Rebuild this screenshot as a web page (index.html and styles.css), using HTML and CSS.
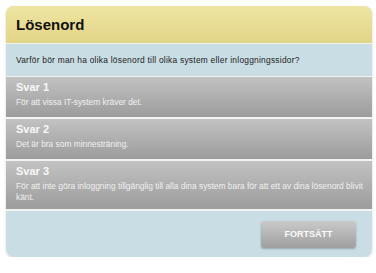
FILE: index.html
```html
<!DOCTYPE html>
<html lang="sv">
<head>
  <meta charset="UTF-8">
  <title>Lösenord</title>
  <link rel="stylesheet" href="styles.css">
</head>
<body>
  <div class="quiz">
    <div class="quiz-header">
      <h1>Lösenord</h1>
    </div>
    <div class="quiz-question">
      <p>Varför bör man ha olika lösenord till olika system eller inloggningssidor?</p>
    </div>
    <div class="answer">
      <h2>Svar 1</h2>
      <p>För att vissa IT-system kräver det.</p>
    </div>
    <div class="answer">
      <h2>Svar 2</h2>
      <p>Det är bra som minnesträning.</p>
    </div>
    <div class="answer">
      <h2>Svar 3</h2>
      <p>För att inte göra inloggning tillgänglig till alla dina system bara för att ett av dina lösenord blivit känt.</p>
    </div>
    <div class="quiz-footer">
      <button class="next-btn">FORTSÄTT</button>
    </div>
  </div>
</body>
</html>
```

FILE: styles.css
```css
body {
  font-family: "Liberation Sans", Arial, sans-serif;
  margin: 0;
  padding: 6px 4px 0 6px;
  background: #ffffff;
}

.quiz {
  width: 366px;
  border-radius: 8px;
  overflow: hidden;
  background-color: #c9dde4;
  box-shadow: 0 1px 3px rgba(0, 0, 0, 0.15);
}

.quiz-header {
  height: 37px;
  padding: 0 10px;
  display: flex;
  align-items: center;
  background: linear-gradient(to bottom, #efe6a4, #e2d486);
  border-bottom: 1px solid #f4f4ee;
}

.quiz-header h1 {
  margin: 0;
  font-size: 15px;
  font-weight: bold;
  color: #111111;
}

.quiz-question {
  height: 32px;
  padding: 0 10px;
  display: flex;
  align-items: center;
  border-bottom: 1px solid #eef3f5;
}

.quiz-question p {
  margin: 0;
  font-size: 8.4px;
  letter-spacing: 0.25px;
  color: #222222;
}

.answer {
  padding: 4px 4px 6px 10px;
  background: linear-gradient(to bottom, #c2c2c2, #9c9c9c);
  border-bottom: 2px solid #f2f2f2;
  min-height: 30px;
}

.answer h2 {
  margin: 0 0 4px 0;
  font-size: 11px;
  font-weight: bold;
  color: #f8f8f8;
}

.answer p {
  margin: 0;
  font-size: 8.4px;
  line-height: 11px;
  color: #f0f0f0;
}

.quiz-footer {
  height: 46px;
  padding-right: 16px;
  display: flex;
  align-items: center;
  justify-content: flex-end;
}

.next-btn {
  width: 95px;
  height: 27px;
  border: none;
  border-radius: 3px;
  background: linear-gradient(to bottom, #cacaca, #9e9e9e);
  box-shadow: 0 1px 2px rgba(0, 0, 0, 0.25);
  color: #fafafa;
  font-family: "Liberation Sans", Arial, sans-serif;
  font-size: 9px;
  font-weight: bold;
  cursor: pointer;
}
```
